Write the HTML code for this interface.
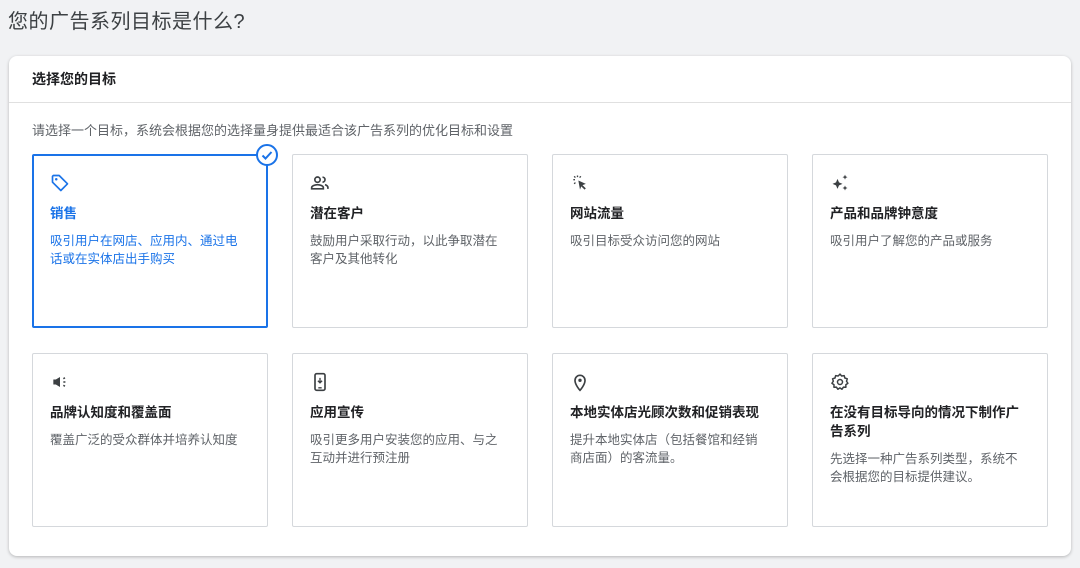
<!DOCTYPE html>
<html><head><meta charset="utf-8"><style>
*{box-sizing:border-box;margin:0;padding:0}
body{width:1080px;height:568px;background:#f1f2f4;font-family:"Liberation Sans","Noto Sans CJK SC",sans-serif;color:#202124;position:relative;overflow:hidden}
h1{position:absolute;left:8px;top:5px;font-size:20px;font-weight:400;color:#3c4043;letter-spacing:0.5px}
.panel{position:absolute;left:9px;top:56px;width:1062px;height:500px;background:#fff;border-radius:8px;box-shadow:0 1px 3px rgba(0,0,0,.25)}
.hd{height:47px;border-bottom:1px solid #e0e0e0;padding:13px 0 0 23px;font-size:14px;font-weight:700;color:#202124}
.sub{position:absolute;left:23px;top:64px;font-size:13px;color:#5f6368}
.c{position:absolute;width:236px;height:174px;border:1px solid #d5d8dc;border-radius:2px;background:#fff;padding:18px 21px 18px 17px}
.c.sel{border:2px solid #1a73e8;padding:17px 20px 17px 16px}
.c svg{display:block;width:20px;height:20px;margin-bottom:11px}
.t{font-size:13.5px;font-weight:700;line-height:19px;margin-bottom:9px;color:#202124}
.d{font-size:12.5px;line-height:18px;color:#5f6368}
.sel .t,.sel .d{color:#1a73e8}
.chk{position:absolute;right:-12px;top:-12px;width:22px;height:22px;border-radius:50%;background:#fff;border:2px solid #1a73e8}
</style></head><body>
<h1>您的广告系列目标是什么?</h1>
<div class="panel">
<div class="hd">选择您的目标</div>
<div class="sub">请选择一个目标，系统会根据您的选择量身提供最适合该广告系列的优化目标和设置</div>

<div class="c sel" style="left:23px;top:98px">
<div class="chk"><svg viewBox="0 0 18 18" style="width:18px;height:18px"><path d="M4.5 9.5l3 3 6-6.5" fill="none" stroke="#1a73e8" stroke-width="2"/></svg></div>
<svg viewBox="0 0 24 24"><path d="M3 4v7l10 10 8-8L11 3H4z" fill="none" stroke="#1a73e8" stroke-width="2" stroke-linejoin="round"/><circle cx="7.5" cy="7.5" r="1.5" fill="#1a73e8"/></svg>
<div class="t">销售</div><div class="d">吸引用户在网店、应用内、通过电话或在实体店出手购买</div></div>

<div class="c" style="left:283px;top:98px">
<svg viewBox="0 0 24 24"><circle cx="9" cy="8" r="3.2" fill="none" stroke="#3c4043" stroke-width="2"/><path d="M2 19v-1.5c0-2 4-3.5 7-3.5s7 1.5 7 3.5V19z" fill="none" stroke="#3c4043" stroke-width="2"/><path d="M15 5a3 3 0 010 6M18 14c2 .6 3.5 1.8 3.5 3.5V19" fill="none" stroke="#3c4043" stroke-width="2"/></svg>
<div class="t">潜在客户</div><div class="d">鼓励用户采取行动，以此争取潜在客户及其他转化</div></div>

<div class="c" style="left:543px;top:98px">
<svg viewBox="0 0 24 24"><path d="M10 9l9 4-4 1.5 4 4-1.5 1.5-4-4L12 20z" fill="#3c4043"/><path d="M9 3v2M4 8h2M5 4l1.5 1.5M5 13l1.5-1.5M13 4l-1.5 1.5" stroke="#3c4043" stroke-width="1.6"/></svg>
<div class="t">网站流量</div><div class="d">吸引目标受众访问您的网站</div></div>

<div class="c" style="left:803px;top:98px">
<svg viewBox="0 0 24 24"><path d="M9 7l1.8 4.2L15 13l-4.2 1.8L9 19l-1.8-4.2L3 13l4.2-1.8z M18 2l.9 2.1L21 5l-2.1.9L18 8l-.9-2.1L15 5l2.1-.9z M18 15l.9 2.1 2.1.9-2.1.9L18 21l-.9-2.1L15 18l2.1-.9z" fill="#3c4043"/></svg>
<div class="t">产品和品牌钟意度</div><div class="d">吸引用户了解您的产品或服务</div></div>

<div class="c" style="left:23px;top:297px">
<svg viewBox="0 0 24 24"><path d="M4 9h3l5-3v12l-5-3H4z" fill="#3c4043"/><path d="M16 8l2-1M16 12h2.5M16 16l2 1" stroke="#3c4043" stroke-width="1.8"/></svg>
<div class="t">品牌认知度和覆盖面</div><div class="d">覆盖广泛的受众群体并培养认知度</div></div>

<div class="c" style="left:283px;top:297px">
<svg viewBox="0 0 24 24"><rect x="6" y="2" width="12" height="20" rx="2" fill="none" stroke="#3c4043" stroke-width="2"/><path d="M12 7v6M9.5 10.5L12 13l2.5-2.5M10 19h4" fill="none" stroke="#3c4043" stroke-width="1.6"/></svg>
<div class="t">应用宣传</div><div class="d">吸引更多用户安装您的应用、与之互动并进行预注册</div></div>

<div class="c" style="left:543px;top:297px">
<svg viewBox="0 0 24 24"><path d="M12 22s-6-6.5-6-12a6 6 0 0112 0c0 5.5-6 12-6 12z" fill="none" stroke="#3c4043" stroke-width="2"/><circle cx="12" cy="10" r="2" fill="#3c4043"/></svg>
<div class="t">本地实体店光顾次数和促销表现</div><div class="d">提升本地实体店（包括餐馆和经销商店面）的客流量。</div></div>

<div class="c" style="left:803px;top:297px">
<svg viewBox="0 0 24 24"><path d="M12 2.5l2 2.3 3-.5.8 2.9 2.9 1-.9 2.9 1.7 2.4-2.5 1.8.1 3-3-.1-1.8 2.5-2.4-1.7-2.4 1.7-1.8-2.5-3 .1.1-3-2.5-1.8 1.7-2.4-.9-2.9 2.9-1 .8-2.9 3 .5z" fill="none" stroke="#3c4043" stroke-width="1.8" stroke-linejoin="round"/><circle cx="12" cy="12" r="3" fill="none" stroke="#3c4043" stroke-width="1.8"/></svg>
<div class="t">在没有目标导向的情况下制作广告系列</div><div class="d">先选择一种广告系列类型，系统不会根据您的目标提供建议。</div></div>
</div>
</body></html>
